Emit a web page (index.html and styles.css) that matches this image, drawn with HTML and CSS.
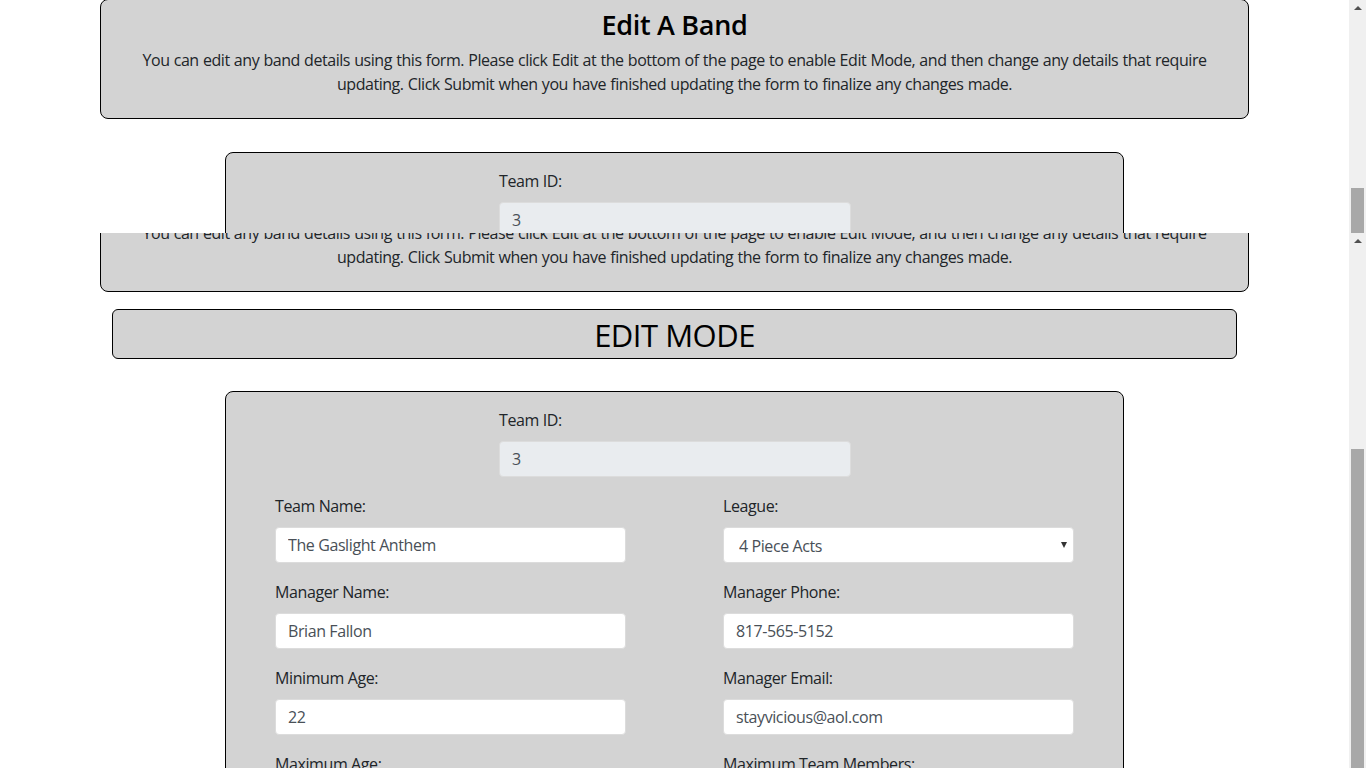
FILE: index.html
```html
<!DOCTYPE html>
<html lang="en">
<head>
<meta charset="utf-8">
<title>Edit A Band</title>
<link rel="stylesheet" href="styles.css">
</head>
<body>
<div class="screen">
  <div class="slice slice-top">
    <div class="page">
      <div class="scroller scroller-top">
        <section class="intro">
          <h2 class="intro-title">Edit A Band</h2>
          <p class="intro-text">You can edit any band details using this form. Please click Edit at the bottom of the page to enable Edit Mode, and then change any details that require updating. Click Submit when you have finished updating the form to finalize any changes made.</p>
        </section>
        <form class="band-form">
          <div class="field field-id">
            <label class="field-label">Team ID:</label>
            <input class="field-input field-readonly" type="text" value="3" readonly>
          </div>
        </form>
      </div>
    </div>
    <div class="scrollbar">
      <span class="sb-arrow"></span>
      <span class="sb-thumb sb-thumb-top"></span>
    </div>
  </div>

  <div class="slice slice-bottom">
    <div class="page">
      <div class="scroller scroller-bottom">
        <section class="intro intro-edit">
          <h2 class="intro-title">Edit A Band</h2>
          <p class="intro-text">You can edit any band details using this form. Please click Edit at the bottom of the page to enable Edit Mode, and then change any details that require updating. Click Submit when you have finished updating the form to finalize any changes made.</p>
        </section>
        <div class="mode-banner">EDIT MODE</div>
        <form class="band-form">
          <div class="field field-id">
            <label class="field-label">Team ID:</label>
            <input class="field-input field-readonly" type="text" value="3" readonly>
          </div>
          <div class="field-grid">
            <div class="field">
              <label class="field-label">Team Name:</label>
              <input class="field-input" type="text" value="The Gaslight Anthem">
            </div>
            <div class="field">
              <label class="field-label">League:</label>
              <div class="select-wrap">
                <select class="field-input field-select">
                  <option>4 Piece Acts</option>
                </select>
              </div>
            </div>
            <div class="field">
              <label class="field-label">Manager Name:</label>
              <input class="field-input" type="text" value="Brian Fallon">
            </div>
            <div class="field">
              <label class="field-label">Manager Phone:</label>
              <input class="field-input" type="text" value="817-565-5152">
            </div>
            <div class="field">
              <label class="field-label">Minimum Age:</label>
              <input class="field-input" type="text" value="22">
            </div>
            <div class="field">
              <label class="field-label">Manager Email:</label>
              <input class="field-input" type="text" value="stayvicious@aol.com">
            </div>
            <div class="field">
              <label class="field-label">Maximum Age:</label>
              <input class="field-input" type="text" value="35">
            </div>
            <div class="field">
              <label class="field-label">Maximum Team Members:</label>
              <input class="field-input" type="text" value="4">
            </div>
          </div>
        </form>
      </div>
    </div>
    <div class="scrollbar">
      <span class="sb-arrow"></span>
      <span class="sb-thumb sb-thumb-bottom"></span>
    </div>
  </div>
</div>
</body>
</html>
```

FILE: styles.css
```css
* { box-sizing: border-box; }

html, body {
  margin: 0;
  padding: 0;
  background: #ffffff;
}

body {
  font-family: "Open Sans", "Noto Sans", sans-serif;
  font-size: 16px;
  line-height: 24px;
  color: #212529;
  overflow: hidden;
}

.screen {
  width: 1366px;
  height: 768px;
  display: flex;
  flex-direction: column;
}

.slice {
  display: flex;
  overflow: hidden;
  flex: none;
}

.slice-top { height: 233px; }
.slice-bottom { height: 535px; }

.page {
  flex: 1;
  overflow: hidden;
  background: #ffffff;
}

.scroller-top { margin-top: -1px; }
.scroller-bottom { margin-top: -61px; }

.intro {
  width: 1149px;
  margin: 0 auto 33px;
  border: 1px solid #000;
  border-radius: 8px;
  background: #d3d3d3;
  padding: 8px 20px 22px;
  text-align: center;
}

.intro-edit { margin-bottom: 17px; }

.intro-title {
  margin: 0 0 6px;
  font-size: 27px;
  line-height: 34px;
  font-weight: 600;
  color: #000;
  letter-spacing: -0.3px;
}

.intro-text {
  margin: 0;
  letter-spacing: -0.45px;
  word-spacing: 0.5px;
}

.mode-banner {
  width: 1125px;
  height: 50px;
  margin: 0 auto 32px;
  border: 1px solid #000;
  border-radius: 6px;
  background: #d3d3d3;
  text-align: center;
  font-size: 31px;
  line-height: 50px;
  color: #000;
  letter-spacing: -0.5px;
}

.band-form {
  width: 899px;
  margin: 0 auto;
  border: 1px solid #000;
  border-radius: 8px;
  background: #d3d3d3;
  padding: 16px 48px 40px 49px;
}

.field {
  display: flex;
  flex-direction: column;
  margin-bottom: 17px;
}

.field-id {
  width: 352px;
  margin-left: auto;
  margin-right: auto;
}

.field-grid {
  display: grid;
  grid-template-columns: 351px 351px;
  column-gap: 97px;
  justify-content: start;
}

.field-label {
  margin-bottom: 9px;
  letter-spacing: -0.4px;
}

.field-input {
  width: 100%;
  height: 36px;
  padding: 6px 12px;
  border: 1px solid #dcdcdc;
  border-radius: 4px;
  background: #fff;
  color: #495057;
  font-family: inherit;
  font-size: 16px;
  line-height: 24px;
  letter-spacing: -0.4px;
  outline: none;
}

.field-readonly {
  background: #e9ecef;
}

.select-wrap {
  position: relative;
}

.field-select {
  appearance: none;
  -webkit-appearance: none;
  padding-left: 15px;
}

.select-wrap::after {
  content: "";
  position: absolute;
  right: 7px;
  top: 15px;
  border-left: 3.5px solid transparent;
  border-right: 3.5px solid transparent;
  border-top: 6px solid #333;
}

.scrollbar {
  width: 17px;
  flex: none;
  background: #f0f0f0;
  display: flex;
  flex-direction: column;
  align-items: center;
}

.sb-arrow {
  margin-top: 6px;
  width: 0;
  height: 0;
  border-left: 4px solid transparent;
  border-right: 4px solid transparent;
  border-bottom: 4px solid #505050;
}

.sb-thumb {
  width: 13px;
  height: 600px;
  background: #a8a8a8;
  flex: none;
}

.sb-thumb-top { margin-top: 178px; }
.sb-thumb-bottom { margin-top: 206px; }
```
